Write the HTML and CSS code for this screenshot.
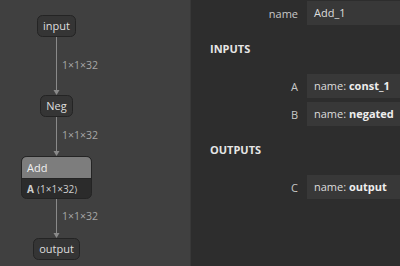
FILE: index.html
```html
<!DOCTYPE html>
<html>
<head>
<meta charset="utf-8">
<title>Add_1</title>
<link rel="stylesheet" href="styles.css">
</head>
<body>
<div class="app">
  <div class="graph">
    <svg width="191" height="266" viewBox="0 0 191 266">
      <g class="edge">
        <line x1="56.5" y1="37" x2="56.5" y2="91" />
        <path d="M53.5 90 L59.5 90 L56.5 95 Z" />
        <line x1="56.5" y1="117" x2="56.5" y2="152" />
        <path d="M53.5 151 L59.5 151 L56.5 156 Z" />
        <line x1="56.5" y1="199" x2="56.5" y2="234" />
        <path d="M53.5 233 L59.5 233 L56.5 238 Z" />
      </g>
      <g class="edge-label">
        <text x="62" y="69">1×1×32</text>
        <text x="62" y="139">1×1×32</text>
        <text x="62" y="220">1×1×32</text>
      </g>

      <g class="node">
        <rect x="37.5" y="15.5" width="38" height="21" rx="5" />
        <text x="56.5" y="30" text-anchor="middle">input</text>
      </g>
      <g class="node">
        <rect x="40.5" y="95.5" width="32" height="21" rx="5" />
        <text x="56.5" y="110" text-anchor="middle">Neg</text>
      </g>
      <g class="node op">
        <rect class="op-body" x="21.5" y="156.5" width="70" height="42" rx="5" />
        <path class="op-head" d="M22 178 L22 162 Q22 157 27 157 L86 157 Q91 157 91 162 L91 178 Z" />
        <line class="op-split" x1="22" y1="178.5" x2="91" y2="178.5" />
        <text class="op-name" x="27" y="172">Add</text>
        <text class="op-attr" x="27" y="193"><tspan class="bold">A</tspan> <tspan class="angle">⟨</tspan>1×1×32<tspan class="angle">⟩</tspan></text>
      </g>
      <g class="node">
        <rect x="33.5" y="238.5" width="46" height="21" rx="5" />
        <text x="56.5" y="253" text-anchor="middle">output</text>
      </g>
    </svg>
  </div>

  <div class="sidebar">
    <div class="row">
      <div class="label">name</div>
      <div class="value">Add_1</div>
    </div>

    <div class="section">INPUTS</div>
    <div class="row">
      <div class="label">A</div>
      <div class="value">name: <b>const_1</b></div>
    </div>
    <div class="row">
      <div class="label">B</div>
      <div class="value">name: <b>negated</b></div>
    </div>

    <div class="section">OUTPUTS</div>
    <div class="row">
      <div class="label">C</div>
      <div class="value">name: <b>output</b></div>
    </div>
  </div>
</div>
</body>
</html>
```

FILE: styles.css
```css
*{ margin:0; padding:0; box-sizing:border-box; }
body{
  background:#2d2d2d;
  font-family:"Open Sans", "Noto Sans", sans-serif;
  font-size:11px;
  overflow:hidden;
}
.app{
  display:flex;
  width:400px;
  height:266px;
}

/* graph canvas */
.graph{
  width:191px;
  flex:none;
  background:#404040;
  border-right:1px solid #383838;
}
.graph svg{ display:block; }
.edge line{ stroke:#8a8a8a; stroke-width:1; }
.edge path{ fill:#8a8a8a; }
.edge-label text{ fill:#a6a6a6; font-size:10.5px; }
.node rect{ fill:#353535; stroke:#242424; stroke-width:1; }
.node text{ fill:#dedede; font-size:11px; }
.op .op-body{ fill:#2b2b2b; }
.op .op-head{ fill:#7d7d7d; }
.op .op-split{ stroke:#242424; }
.op .op-name{ fill:#f0f0f0; }
.op .op-attr{ fill:#cfcfcf; font-size:10px; }
.op .bold{ font-weight:bold; }
.op .angle{ font-family:"DejaVu Sans", sans-serif; font-size:9px; }

/* properties */
.sidebar{
  flex:1;
  padding-top:1px;
  color:#dddddd;
}
.row{
  display:grid;
  grid-template-columns:107px 1fr;
  column-gap:9px;
  align-items:center;
  margin-bottom:4px;
}
.label{
  text-align:right;
  color:#c8c8c8;
}
.value{
  height:24px;
  line-height:24px;
  padding-left:7px;
  background:#383838;
  white-space:nowrap;
  overflow:hidden;
}
.value b{ color:#eeeeee; }
.section{
  padding-left:19px;
  margin-top:16px;
  margin-bottom:17px;
  line-height:16px;
  font-weight:bold;
  font-size:11px;
  color:#e6e6e6;
}
```
